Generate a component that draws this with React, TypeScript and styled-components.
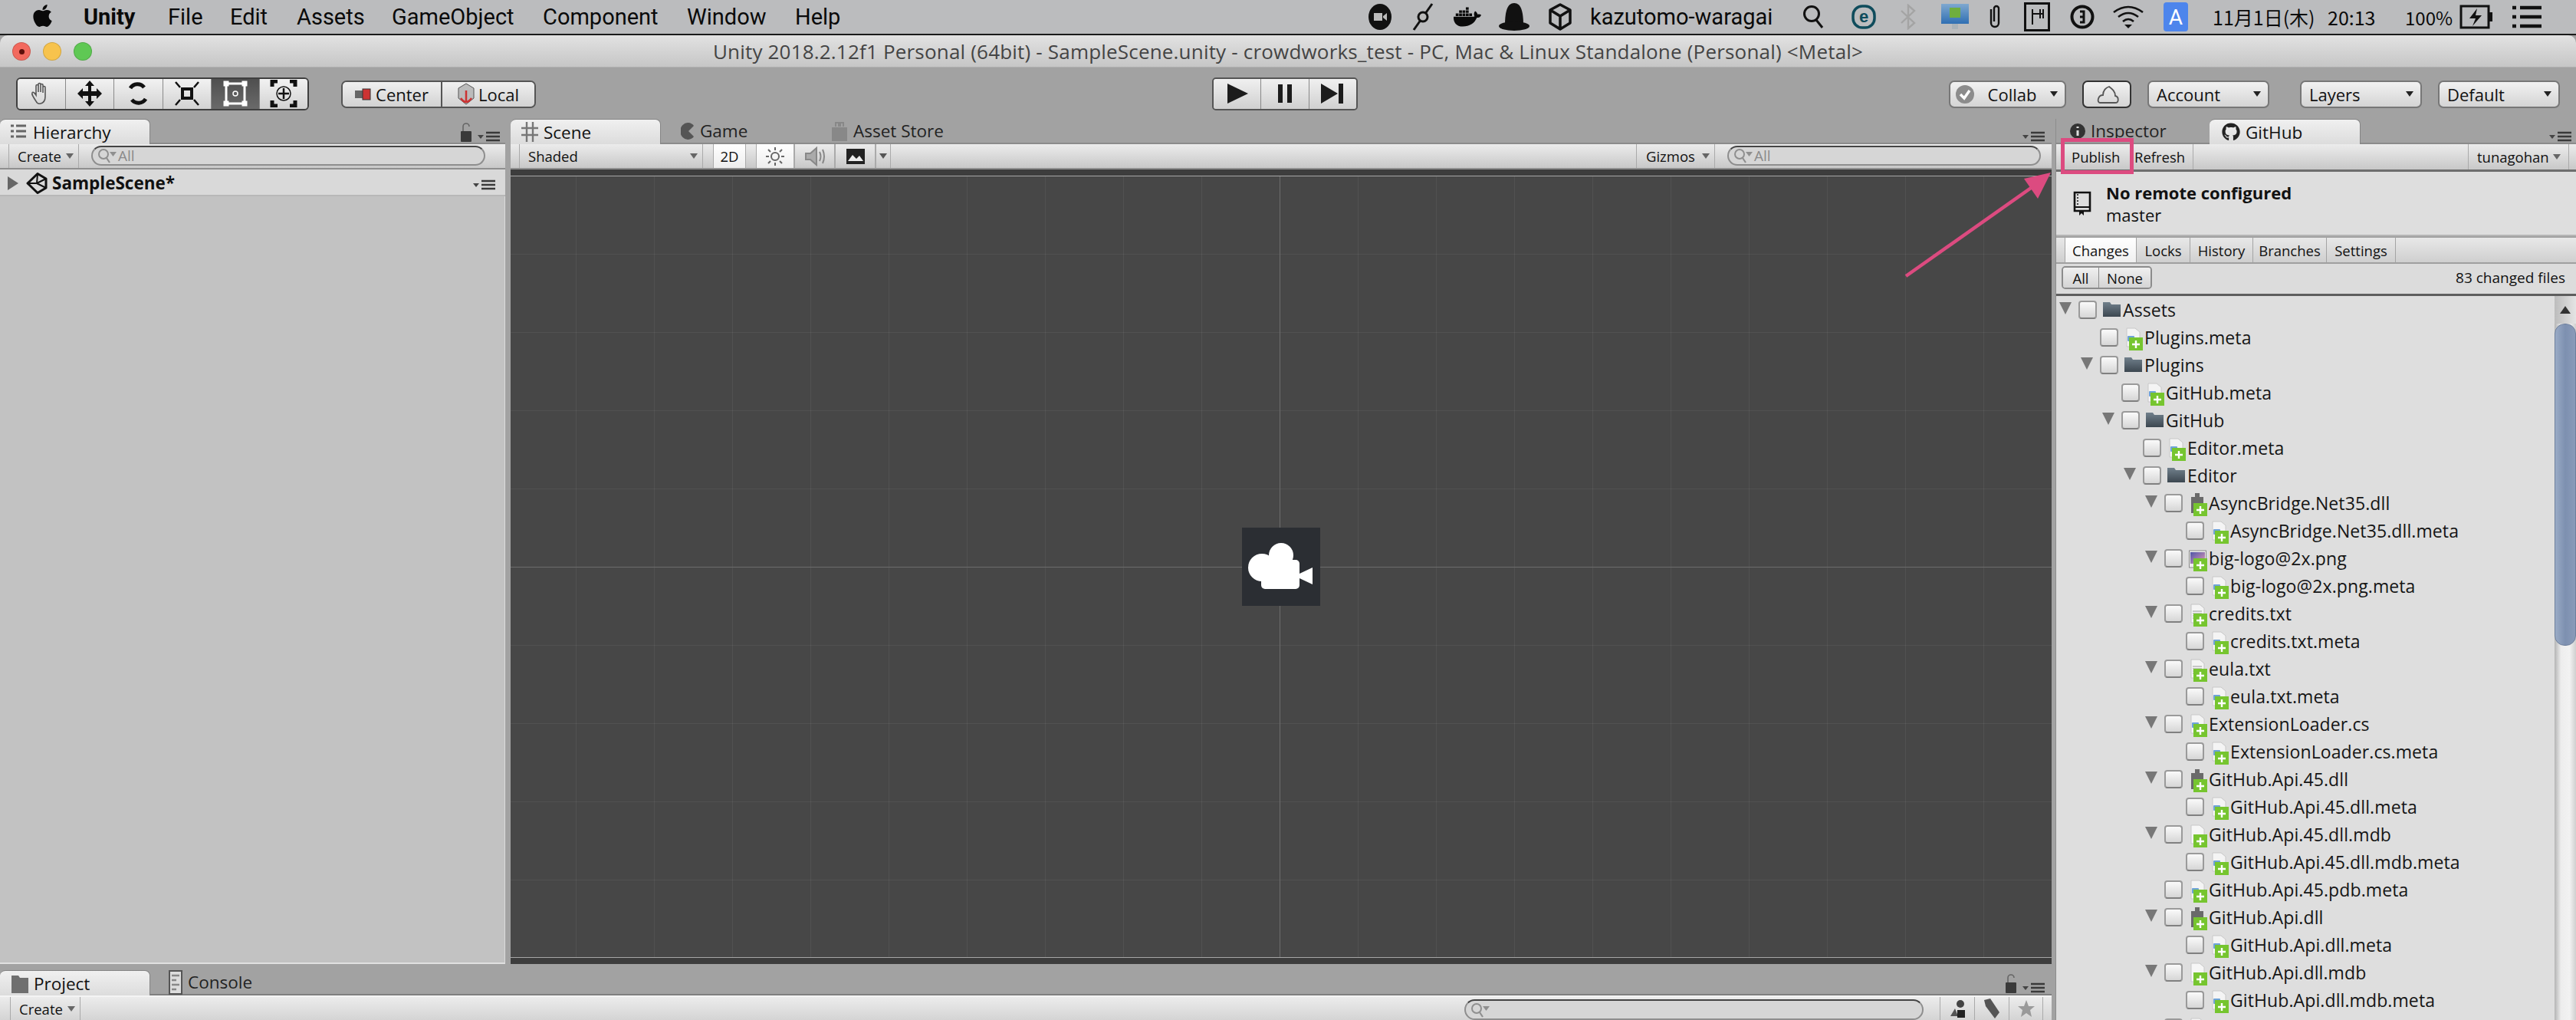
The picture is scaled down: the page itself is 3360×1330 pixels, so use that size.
import React from 'react';
import styled, { createGlobalStyle, css } from 'styled-components';
import { FaApple, FaDocker, FaGithub } from 'react-icons/fa';

const UI_FONT = '"Open Sans", "Noto Sans", "Liberation Sans", sans-serif';
const PINK = '#dc4b80';

const GlobalStyle = createGlobalStyle`
  html, body { margin: 0; padding: 0; background: #a2a2a2; }
  * { box-sizing: border-box; }
`;

// --- macOS shell ---
const Page = styled.div`
  position: relative;
  width: 3360px; height: 1330px; overflow: hidden;
  display: flex; flex-direction: column;
  background: #a2a2a2; font-family: ${UI_FONT}; color: #111;
`;
const MenuBar = styled.div`
  height: 46px; flex: none; display: flex; align-items: center;
  background: #bbbcbe; border-bottom: 2px solid #1a1a1a;
  font-family: "Roboto", "Liberation Sans", sans-serif; font-size: 29px; color: #0a0a0a;
`;
const MenuLeft = styled.div`
  display: flex; align-items: center; padding-left: 41px;
  svg { width: 29px; height: 33px; margin-right: 39px; margin-top: -4px; }
`;
const MenuItem = styled.span<{ $w: number; $bold?: boolean }>`
  width: ${p => p.$w}px; white-space: nowrap;
  font-weight: ${p => (p.$bold ? 700 : 400)};
`;
const MenuRight = styled.div`
  margin-left: auto; display: flex; align-items: center; height: 44px;
`;
const StatusSlot = styled.span<{ $w: number }>`
  width: ${p => p.$w}px; flex: none; display: flex; align-items: center; white-space: nowrap;
`;
const DateText = styled.span<{ $size?: number }>`
  font-family: "Noto Sans CJK JP", "Roboto", sans-serif; font-size: ${p => p.$size ?? 25}px; white-space: nowrap;
`;
const TitleBar = styled.div`
  height: 42px; flex: none; display: flex; align-items: center; justify-content: center; position: relative;
  background: linear-gradient(#e2e2e2, #c6c6c6); border-radius: 10px 10px 0 0;
  border-bottom: 1px solid #b0b0b0;
  font-size: 26px; color: #444; white-space: nowrap; letter-spacing: 0.19px;
`;
const TrafficLights = styled.div`
  position: absolute; left: 16px; top: 9px; display: flex; gap: 16px;
`;
const Light = styled.span<{ $c: string }>`
  width: 24px; height: 24px; border-radius: 50%; background: ${p => p.$c}; border: 1px solid rgba(0,0,0,.15);
  display: flex; align-items: center; justify-content: center;
  i { width: 7px; height: 7px; border-radius: 50%; background: #5e0f0b; }
`;

// --- Unity main toolbar ---
const MainToolbar = styled.div`
  height: 67px; flex: none; display: flex; align-items: center; padding: 0 21px;
  background: #a2a2a2;
`;
const ToolGroup = styled.div`
  width: 382px; height: 43px; display: flex; border: 2px solid #3f3f3f; border-radius: 6px; overflow: hidden;
  margin-top: 1px; flex: none;
`;
const ToolBtn = styled.div<{ $on?: boolean }>`
  flex: 1; display: flex; align-items: center; justify-content: center;
  background: ${p => (p.$on ? 'linear-gradient(#4f4f4f, #6a6a6a)' : 'linear-gradient(#f2f2f2, #d2d2d2)')};
  & + & { border-left: 1px solid #8a8a8a; }
`;
const PivotGroup = styled.div`
  margin-left: 42px; width: 254px; height: 36px; display: flex; flex: none;
  border: 2px solid #555; border-radius: 7px; overflow: hidden; margin-top: 3px;
`;
const PivotBtn = styled.div<{ $w: number }>`
  width: ${p => p.$w}px; display: flex; align-items: center; justify-content: center; gap: 5px; font-size: 22px;
  background: linear-gradient(#f0f0f0, #d2d2d2);
  & + & { border-left: 2px solid #555; }
`;
const PlayGroup = styled.div`
  margin-left: 882px; margin-top: 1px; width: 190px; height: 43px; flex: none; display: flex;
  border: 2px solid #555; border-radius: 5px; overflow: hidden;
`;
const PlayBtn = styled.div`
  flex: 1; display: flex; align-items: center; justify-content: center;
  background: linear-gradient(#f0f0f0, #d0d0d0);
  & + & { border-left: 1px solid #888; }
`;
const RightTools = styled.div`
  margin-left: auto; display: flex; align-items: center; margin-top: 2px;
`;
const DropBtn = styled.div<{ $w: number; $gap?: number; $dark?: boolean; $pl?: number }>`
  width: ${p => p.$w}px; height: 36px; margin-left: ${p => p.$gap ?? 0}px; flex: none;
  display: flex; align-items: center; justify-content: space-between; padding: 0 9px 0 ${p => p.$pl ?? 10}px;
  background: linear-gradient(#f2f2f2, #d4d4d4); font-size: 22px;
  border: 2px solid #777; border-radius: 7px;
  ${p => p.$dark && css`border-color: #333; justify-content: center;`}
`;
const Caret = styled.span<{ $c?: string }>`
  display: block; width: 0; height: 0; flex: none;
  border-left: 5px solid transparent; border-right: 5px solid transparent;
  border-top: 7px solid ${p => p.$c ?? '#222'};
`;

// --- docking layout ---
const Work = styled.div`
  flex: 1; min-height: 0; display: flex;
`;
const LeftArea = styled.div`
  width: 2681px; flex: none; display: flex; flex-direction: column;
`;
const UpperRow = styled.div`
  height: 1102px; flex: none; display: flex;
`;
const Dock = styled.div<{ $w: number }>`
  width: ${p => p.$w}px; flex: none; display: flex; flex-direction: column;
`;
const TabRow = styled.div`
  height: 33px; flex: none; display: flex; align-items: stretch;
  border-bottom: 2px solid #8b8b8b;
`;
const Tab = styled.div<{ $w: number; $active?: boolean; $pad?: number }>`
  width: ${p => p.$w}px; flex: none; display: flex; align-items: center; gap: 7px;
  padding-left: ${p => p.$pad ?? 14}px; font-size: 22.5px; color: ${p => (p.$active ? '#111' : '#222')};
  margin-bottom: ${p => (p.$active ? -2 : 0)}px;
  ${p => p.$active && css`
    background: linear-gradient(#f0f0f0, #dcdcdc);
    border-radius: 7px 7px 0 0;
    border-top: 1px solid #858585;
    border-right: 1px solid #858585;
  `}
`;
const PaneMenu = styled.div<{ $r?: number; $b?: number }>`
  margin-left: auto; margin-right: ${p => p.$r ?? 6}px; margin-bottom: ${p => p.$b ?? 1}px;
  align-self: flex-end; display: flex; align-items: flex-end; gap: 8px;
`;
const Bar = styled.div`
  height: 33px; flex: none; display: flex; align-items: stretch;
  background: linear-gradient(#ececec, #c8c8c8);
  border-bottom: 2px solid #8f8f8f;
`;
const BarBtn = styled.div<{ $w: number; $on?: boolean; $flat?: boolean; $ml?: number; $pl?: number }>`
  width: ${p => p.$w}px; flex: none; margin-left: ${p => p.$ml ?? 0}px;
  display: flex; align-items: center; justify-content: space-between; padding: 0 6px 0 ${p => p.$pl ?? 11}px; font-size: 18.5px; white-space: nowrap;
  border-left: 1px solid #aaa; border-right: 1px solid #aaa;
  ${p => (p.$on || p.$flat) && css`justify-content: center; padding: 0;`}
  ${p => p.$on && css`background: linear-gradient(#fff, #ededed);`}
`;
const GizmosBtn = styled(BarBtn)`
  margin-left: auto;
`;
const SearchBox = styled.div<{ $w: number; $ml: number; $mr?: number }>`
  width: ${p => p.$w}px; flex: none; margin: 2px ${p => p.$mr ?? 0}px 3px ${p => p.$ml}px;
  display: flex; align-items: center; padding-left: 6px; gap: 1px;
  border: 2px solid #8e8e8e; border-top-color: #444; border-radius: 14px; background: #d6d6d6;
  font-size: 19px; color: #8a8a8a;
`;
const ProjectSearch = styled(SearchBox)`
  margin-top: 3px; margin-bottom: 0;
`;
const HierarchyBody = styled.div`
  flex: 1; background: #c2c2c2; border-right: 1px solid #dcdcdc; border-bottom: 2px solid #e0e0e0;
`;
const SceneHeader = styled.div`
  height: 35px; flex: none; display: flex; align-items: center; padding-left: 10px; padding-top: 2px;
  background: #d9d9d9; border-bottom: 2px solid #b8b8b8; font-weight: 700; font-size: 22.5px;
`;
const ClosedArrow = styled.span`
  display: block; flex: none; width: 0; height: 0; margin-right: 10px;
  border-top: 9px solid transparent; border-bottom: 9px solid transparent; border-left: 14px solid #666;
`;
const LogoSlot = styled.span`
  display: flex; flex: none; margin-right: 6px;
`;
const SceneDock = styled(Dock)`
  margin-left: 7px; padding-right: 5px;
`;
const SceneView = styled.div`
  flex: 1; min-height: 0; display: flex; align-items: center; justify-content: center;
  border-top: 8px solid #3d3d3d; border-bottom: 8px solid #3d3d3d;
  background-color: #474747;
  background-image:
    linear-gradient(#a6a6a6, #a6a6a6), linear-gradient(#a6a6a6, #a6a6a6),
    linear-gradient(#6c6c6c, #6c6c6c), linear-gradient(#6c6c6c, #6c6c6c),
    linear-gradient(90deg, rgba(255,255,255,.055) 1px, transparent 1px),
    linear-gradient(rgba(255,255,255,.055) 1px, transparent 1px);
  background-size: 100% 1px, 100% 1px, 1px 100%, 100% 1px, 102px 102px, 102px 102px;
  background-position: 0 0, 0 100%, 1003px 0, 0 510px, 85px 0, 85px 0;
  background-repeat: no-repeat, no-repeat, no-repeat, no-repeat, repeat, repeat;
`;
const CameraBadge = styled.div`
  width: 102px; height: 102px; background: #2b2e33; display: flex; align-items: center; justify-content: center;
`;
const ProjectDock = styled.div`
  flex: 1; display: flex; flex-direction: column; margin-top: 8px; padding-right: 5px;
`;
const ProjectTabs = styled(TabRow)`
  border-bottom-color: #7f7f7f;
`;
const ProjectBar = styled.div`
  flex: 1; display: flex; align-items: stretch; background: linear-gradient(#ececec, #d4d4d4); border-top: 2px solid #f4f4f4;
`;
const IconCell = styled.div`
  width: 45px; flex: none; display: flex; align-items: center; justify-content: center;
  border-left: 1px solid #aaa;
  &:last-child { border-right: 1px solid #aaa; }
`;

// --- GitHub inspector panel ---
const RightDock = styled.div`
  flex: 1; min-width: 0; display: flex; flex-direction: column;
  border-left: 1px solid #8c8c8c;
`;
const GhBar = styled(Bar)`
  height: 36px; border-bottom: 3px solid #6e6e6e; padding-left: 11px;
`;
const GhBtn = styled.div<{ $w: number }>`
  width: ${p => p.$w}px; flex: none; font-size: 18.5px;
  display: flex; align-items: center; justify-content: flex-start; white-space: nowrap;
`;
const PublishBtn = styled(GhBtn)`
  padding-left: 9px;
`;
const RefreshBtn = styled(GhBtn)`
  border-right: 1px solid #aaa;
`;
const UserDrop = styled(GhBtn)`
  margin-left: auto; margin-right: 9px; justify-content: space-between; padding: 0 10px 0 11px;
  border-left: 1px solid #aaa; border-right: 1px solid #aaa;
`;
const RepoInfo = styled.div`
  height: 84px; flex: none; display: flex; align-items: center; gap: 19px; padding-left: 22px;
  background: #dedede; border-bottom: 2px solid #b4b4b4;
`;
const RepoText = styled.div`
  display: flex; flex-direction: column; gap: 3px; line-height: 26px; font-size: 22px;
  b { font-weight: 700; }
`;
const SubTabs = styled.div`
  height: 34px; flex: none; display: flex; padding-left: 11px; margin-top: 2px;
  background: linear-gradient(#e8e8e8, #cfcfcf); border-bottom: 2px solid #a0a0a0;
`;
const SubTab = styled.div<{ $w: number; $on?: boolean }>`
  width: ${p => p.$w}px; display: flex; align-items: center; justify-content: center; font-size: 18.5px; flex: none;
  border-right: 1px solid #a4a4a4;
  ${p => p.$on && css`background: linear-gradient(#fff, #f0f0f0); border-left: 1px solid #a4a4a4;`}
`;
const FilterRow = styled.div`
  height: 42px; flex: none; display: flex; align-items: center; justify-content: space-between;
  padding: 0 14px 3px 7px; background: #dcdcdc; border-bottom: 3px solid #5e5e5e; font-size: 19px;
`;
const Segmented = styled.div`
  display: flex; height: 30px; border: 2px solid #8c8c8c; border-radius: 5px; overflow: hidden; font-size: 18.5px;
`;
const Segment = styled.div<{ $w: number }>`
  width: ${p => p.$w}px; display: flex; align-items: center; justify-content: center;
  background: linear-gradient(#f0f0f0, #d4d4d4);
  & + & { border-left: 1px solid #8c8c8c; }
`;
const TreeArea = styled.div`
  flex: 1; min-height: 0; display: flex; background: #dedede; overflow: hidden;
`;
const Tree = styled.div`
  flex: 1; overflow: hidden;
`;
const Row = styled.div<{ $level: number }>`
  height: 36px; display: flex; align-items: center; white-space: nowrap;
  padding-left: ${p => 4 + p.$level * 28}px; font-size: 23px; letter-spacing: 0.1px; color: #151515;
`;
const ArrowSlot = styled.span`
  width: 25px; flex: none; display: block;
`;
const OpenArrow = styled.span`
  display: block; width: 0; height: 0; margin-top: -5px;
  border-left: 8.5px solid transparent; border-right: 8.5px solid transparent; border-top: 16px solid #777;
`;
const Check = styled.span`
  width: 24px; height: 24px; flex: none; border-radius: 4px; margin-right: 8px;
  border: 2px solid #9a9a9a; border-bottom-color: #808080;
  background: linear-gradient(#fafafa, #d6d6d6);
`;
const IconBox = styled.span`
  width: 24px; height: 32px; flex: none; position: relative; display: block; margin-right: 2px;
  & > svg { display: block; }
`;
const PlusBadge = styled.span`
  position: absolute; left: 6px; top: 16px; width: 18px; height: 17px; background: #76c52f;
  display: flex; align-items: center; justify-content: center;
`;
const Scrollbar = styled.div`
  width: 28px; flex: none; display: flex; flex-direction: column; align-items: stretch;
  background: linear-gradient(90deg, #b4b4b4, #ededed 30%, #f2f2f2 70%, #cfcfcf);
`;
const ScrollUp = styled.div`
  height: 36px; flex: none; display: flex; align-items: center; justify-content: center;
  background: linear-gradient(90deg, #bcbcbc, #e4e4e4);
  i { width: 0; height: 0; border-left: 7px solid transparent; border-right: 7px solid transparent; border-bottom: 10px solid #333; }
`;
const ScrollThumb = styled.div`
  height: 420px; flex: none; border-radius: 13px; border: 1px solid #6d7f9c;
  background: linear-gradient(90deg, #9aabc6, #7d90b0 50%, #8a9bb9);
`;

// --- annotation over the screenshot ---
const Highlight = styled.div`
  position: absolute; left: 2688px; top: 180px; width: 95px; height: 47px;
  border: 5px solid ${PINK}; pointer-events: none;
`;
const Annotation = styled.svg`
  position: absolute; left: 2480px; top: 215px; width: 200px; height: 150px; pointer-events: none;
`;

// --- icons ---
const UnityMark = () => (
  <svg width="28" height="28" viewBox="0 0 28 28" fill="none" stroke="#111" strokeWidth="3" strokeLinejoin="round">
    <path d="M15 1.5 L26 8 V20 L15 26.5 L2 14 Z" />
    <path d="M2 14 H14 L26 8 M14 14 L26 20 M14 14 L15 2" strokeWidth="2" />
  </svg>
);
const FileIcon = () => (
  <svg width="24" height="32" viewBox="0 0 24 32">
    <path d="M3 4 H14 L20 9 V28 H3 Z" fill="#f4f4f4" stroke="#c8c8c8" />
    <rect x="4" y="14" width="9" height="7" rx="1" fill="#6ea3d8" />
  </svg>
);
const PlainFileIcon = () => (
  <svg width="24" height="32" viewBox="0 0 24 32">
    <path d="M3 4 H14 L20 9 V28 H3 Z" fill="#f6f6f6" stroke="#c8c8c8" />
  </svg>
);
const TxtIcon = () => (
  <svg width="24" height="32" viewBox="0 0 24 32">
    <path d="M3 4 H14 L20 9 V28 H3 Z" fill="#f4f4f4" stroke="#c4c4c4" />
    <path d="M5 13 H17 M5 16 H17 M5 19 H17 M5 22 H17" stroke="#999" strokeWidth="1.2" />
  </svg>
);
const DllIcon = () => (
  <svg width="24" height="32" viewBox="0 0 24 32">
    <path d="M8 3 h6 v5 h5 v8 h-5 v3 h5 v10 H3 V8 h5 Z" fill="#6a6a6a" />
  </svg>
);
const PngIcon = () => (
  <svg width="24" height="32" viewBox="0 0 24 32">
    <defs>
      <linearGradient id="pngFill" x1="0" y1="0" x2="1" y2="1">
        <stop offset="0" stopColor="#4f56a8" />
        <stop offset="1" stopColor="#e59bb6" />
      </linearGradient>
    </defs>
    <rect x="0.5" y="6" width="22" height="22" fill="#eee" stroke="#888" />
    <rect x="2" y="8" width="19" height="15" fill="url(#pngFill)" />
  </svg>
);
const FolderIcon = () => (
  <svg width="24" height="32" viewBox="0 0 24 32">
    <defs>
      <linearGradient id="folderFill" x1="0" y1="0" x2="0" y2="1">
        <stop offset="0" stopColor="#71808c" />
        <stop offset="1" stopColor="#3c4750" />
      </linearGradient>
    </defs>
    <path d="M0 6 H9 L11 9 H23 V25 H0 Z" fill="url(#folderFill)" />
  </svg>
);
const Plus = () => (
  <svg width="12" height="12" viewBox="0 0 12 12">
    <path d="M6 1 V11 M1 6 H11" stroke="#fff" strokeWidth="2.4" />
  </svg>
);
const PaneLines = () => (
  <svg width="30" height="14" viewBox="0 0 30 14">
    <path d="M0 5 H8 L4 10 Z" fill="#444" />
    <path d="M11 2 H29 M11 7 H29 M11 12 H29" stroke="#3a3a3a" strokeWidth="2.4" />
  </svg>
);
const Padlock = () => (
  <svg width="14" height="26" viewBox="0 0 14 26">
    <path d="M3 13 V6 a4 4 0 0 1 8 0" fill="none" stroke="#666" strokeWidth="1.6" />
    <rect x="0" y="12" width="14" height="14" rx="1" fill="#3a3a3a" />
  </svg>
);
const SearchGlass = () => (
  <svg width="26" height="22" viewBox="0 0 26 22" fill="none">
    <circle cx="8" cy="9" r="6" stroke="#8f8f8f" strokeWidth="2" />
    <path d="M12 14 L16 20" stroke="#8f8f8f" strokeWidth="2.2" />
    <path d="M16 6 H25 L20.5 12 Z" fill="#8f8f8f" />
  </svg>
);
const ToolIcon = ({ d, on }: { d: React.ReactNode; on?: boolean }) => (
  <svg width="42" height="36" viewBox="0 0 42 36" fill="none" stroke={on ? '#fff' : '#111'}>{d}</svg>
);
const PlayIcon = ({ kind }: { kind: 'play' | 'pause' | 'step' }) => (
  <svg width="30" height="26" viewBox="0 0 30 26" fill="#1c1c1c">
    {kind === 'play' && <path d="M2 0 L29 13 L2 26 Z" />}
    {kind === 'pause' && <path d="M6 1 H12 V25 H6 Z M18 1 H24 V25 H18 Z" />}
    {kind === 'step' && <path d="M0 0 L22 13 L0 26 Z M23 0 H29 V26 H23 Z" />}
  </svg>
);

type Kind = 'folder' | 'meta' | 'txt' | 'dll' | 'png' | 'cs' | 'mdb';
interface TreeItem { level: number; name: string; kind: Kind; open?: boolean; }

const TREE: TreeItem[] = [
  { level: 0, name: 'Assets', kind: 'folder', open: true },
  { level: 1, name: 'Plugins.meta', kind: 'meta' },
  { level: 1, name: 'Plugins', kind: 'folder', open: true },
  { level: 2, name: 'GitHub.meta', kind: 'meta' },
  { level: 2, name: 'GitHub', kind: 'folder', open: true },
  { level: 3, name: 'Editor.meta', kind: 'meta' },
  { level: 3, name: 'Editor', kind: 'folder', open: true },
  { level: 4, name: 'AsyncBridge.Net35.dll', kind: 'dll', open: true },
  { level: 5, name: 'AsyncBridge.Net35.dll.meta', kind: 'meta' },
  { level: 4, name: 'big-logo@2x.png', kind: 'png', open: true },
  { level: 5, name: 'big-logo@2x.png.meta', kind: 'meta' },
  { level: 4, name: 'credits.txt', kind: 'txt', open: true },
  { level: 5, name: 'credits.txt.meta', kind: 'meta' },
  { level: 4, name: 'eula.txt', kind: 'txt', open: true },
  { level: 5, name: 'eula.txt.meta', kind: 'meta' },
  { level: 4, name: 'ExtensionLoader.cs', kind: 'cs', open: true },
  { level: 5, name: 'ExtensionLoader.cs.meta', kind: 'meta' },
  { level: 4, name: 'GitHub.Api.45.dll', kind: 'dll', open: true },
  { level: 5, name: 'GitHub.Api.45.dll.meta', kind: 'meta' },
  { level: 4, name: 'GitHub.Api.45.dll.mdb', kind: 'mdb', open: true },
  { level: 5, name: 'GitHub.Api.45.dll.mdb.meta', kind: 'meta' },
  { level: 4, name: 'GitHub.Api.45.pdb.meta', kind: 'meta' },
  { level: 4, name: 'GitHub.Api.dll', kind: 'dll', open: true },
  { level: 5, name: 'GitHub.Api.dll.meta', kind: 'meta' },
  { level: 4, name: 'GitHub.Api.dll.mdb', kind: 'mdb', open: true },
  { level: 5, name: 'GitHub.Api.dll.mdb.meta', kind: 'meta' },
  // only the top of this row's checkbox and icon fits in the window
  { level: 4, name: '', kind: 'meta' },
];

const TreeRow = ({ item }: { item: TreeItem }) => (
  <Row $level={item.level}>
    <ArrowSlot>{item.open && <OpenArrow />}</ArrowSlot>
    <Check />
    <IconBox>
      {item.kind === 'folder' && <FolderIcon />}
      {(item.kind === 'meta' || item.kind === 'cs') && <FileIcon />}
      {item.kind === 'mdb' && <PlainFileIcon />}
      {item.kind === 'txt' && <TxtIcon />}
      {item.kind === 'dll' && <DllIcon />}
      {item.kind === 'png' && <PngIcon />}
      {item.kind !== 'folder' && <PlusBadge><Plus /></PlusBadge>}
    </IconBox>
    {item.name}
  </Row>
);

export default function App() {
  return (
    <Page>
      <GlobalStyle />
      <MenuBar>
        <MenuLeft>
          <FaApple />
          <MenuItem $w={110} $bold>Unity</MenuItem>
          <MenuItem $w={81}>File</MenuItem>
          <MenuItem $w={87}>Edit</MenuItem>
          <MenuItem $w={124}>Assets</MenuItem>
          <MenuItem $w={197}>GameObject</MenuItem>
          <MenuItem $w={188}>Component</MenuItem>
          <MenuItem $w={141}>Window</MenuItem>
          <MenuItem $w={60}>Help</MenuItem>
        </MenuLeft>
        <MenuRight>
          <StatusSlot $w={53}>
            <svg width="30" height="34" viewBox="0 0 30 34"><ellipse cx="15" cy="17" rx="15" ry="17" fill="#111" /><path d="M7 12 H18 V22 H7 Z M19 16 L24 12 V22 L19 18 Z" fill="#bbb" /></svg>
          </StatusSlot>
          <StatusSlot $w={58}>
            <svg width="36" height="38" viewBox="0 0 36 38" fill="none" stroke="#111" strokeWidth="3"><path d="M30 2 L6 36" /><circle cx="18" cy="19" r="6" fill="#bbb" /></svg>
          </StatusSlot>
          <StatusSlot $w={58}><FaDocker size={36} /></StatusSlot>
          <StatusSlot $w={66}>
            <svg width="42" height="38" viewBox="0 0 42 38" fill="#111"><path d="M9 30 C9 12 12 1 21 1 C30 1 33 12 33 30 Z" /><ellipse cx="21" cy="31" rx="20" ry="6" /></svg>
          </StatusSlot>
          <StatusSlot $w={54}>
            <svg width="30" height="36" viewBox="0 0 30 36" fill="none" stroke="#111" strokeWidth="3.5" strokeLinejoin="round"><path d="M15 2 L28 9 V26 L15 34 L2 26 V9 Z M2 9 L15 17 L28 9 M15 17 V34" /></svg>
          </StatusSlot>
          <StatusSlot $w={277}>kazutomo-waragai</StatusSlot>
          <StatusSlot $w={64}>
            <svg width="28" height="32" viewBox="0 0 28 32" fill="none" stroke="#111" strokeWidth="3"><circle cx="12" cy="12" r="9.5" /><path d="M18 20 L26 30" /></svg>
          </StatusSlot>
          <StatusSlot $w={63}>
            <svg width="32" height="32" viewBox="0 0 32 32"><rect x="2" y="2" width="28" height="28" rx="12" fill="none" stroke="#0f4c5c" strokeWidth="3.5" /><text x="16" y="23" textAnchor="middle" fontSize="22" fontWeight="700" fontFamily="Liberation Sans" fill="#0f4c5c">e</text></svg>
          </StatusSlot>
          <StatusSlot $w={53}>
            <svg width="22" height="34" viewBox="0 0 22 34" fill="none" stroke="#a4a4a4" strokeWidth="2.4"><path d="M2 9 L19 25 L11 32 V2 L19 9 L2 25" /></svg>
          </StatusSlot>
          <StatusSlot $w={61}>
            <svg width="38" height="38" viewBox="0 0 38 38">
              <defs>
                <linearGradient id="screenFill" x1="0" y1="0" x2="0" y2="1">
                  <stop offset="0" stopColor="#7fa8cf" />
                  <stop offset="1" stopColor="#2f6fb3" />
                </linearGradient>
              </defs>
              <rect x="1" y="2" width="36" height="26" fill="url(#screenFill)" />
              <rect x="12" y="7" width="14" height="13" fill="#6fae3e" />
              <rect x="15" y="28" width="8" height="7" fill="#a9b2b8" />
            </svg>
          </StatusSlot>
          <StatusSlot $w={48}>
            <svg width="20" height="36" viewBox="0 0 20 36" fill="none" stroke="#111" strokeWidth="2.4"><path d="M5 8 V26 a5 5 0 0 0 10 0 V7 a3 3 0 0 0 -6 0 V24" /></svg>
          </StatusSlot>
          <StatusSlot $w={60}>
            <svg width="34" height="38" viewBox="0 0 34 38"><rect x="1.5" y="1.5" width="31" height="35" fill="none" stroke="#111" strokeWidth="3" /><path d="M11 9 V29 M21 9 V21 M25 9 V21 M11 15 H25" stroke="#111" strokeWidth="2" fill="none" /></svg>
          </StatusSlot>
          <StatusSlot $w={55}>
            <svg width="32" height="32" viewBox="0 0 32 32" fill="none"><circle cx="16" cy="16" r="13.5" stroke="#111" strokeWidth="4" /><path d="M13 9 H18 V23 H13 M13 16 H18" stroke="#111" strokeWidth="3" /></svg>
          </StatusSlot>
          <StatusSlot $w={67}>
            <svg width="42" height="30" viewBox="0 0 42 30" fill="none" stroke="#111" strokeWidth="2.6"><path d="M2 9 Q21 -5 40 9 M8 15 Q21 5 34 15 M14 21 Q21 15 28 21" /><path d="M16 25 H26 L21 30 Z" fill="#111" stroke="none" /></svg>
          </StatusSlot>
          <StatusSlot $w={64}>
            <svg width="32" height="38" viewBox="0 0 32 38"><rect width="32" height="38" rx="4" fill="#4d85ec" /><text x="16" y="29" textAnchor="middle" fontSize="28" fontFamily="Roboto" fill="#fff">A</text></svg>
          </StatusSlot>
          <StatusSlot $w={150}><DateText>11月1日(木)</DateText></StatusSlot>
          <StatusSlot $w={101}><DateText>20:13</DateText></StatusSlot>
          <StatusSlot $w={71}><DateText $size={24}>100%</DateText></StatusSlot>
          <StatusSlot $w={69}>
            <svg width="44" height="32" viewBox="0 0 44 32" fill="none"><rect x="2" y="2" width="36" height="28" stroke="#111" strokeWidth="3" /><rect x="39" y="10" width="4" height="12" fill="#111" /><path d="M23 5 L13 18 H21 L17 28 L29 14 H21 Z" fill="#111" /></svg>
          </StatusSlot>
          <StatusSlot $w={83}>
            <svg width="38" height="30" viewBox="0 0 38 30"><path d="M0 3 H5 M0 15 H5 M0 27 H5 M10 3 H38 M10 15 H38 M10 27 H38" stroke="#111" strokeWidth="4.5" /></svg>
          </StatusSlot>
        </MenuRight>
      </MenuBar>

      <TitleBar>
        <TrafficLights>
          <Light $c="#f2695e"><i /></Light>
          <Light $c="#f7c34d" />
          <Light $c="#5fc854" />
        </TrafficLights>
        Unity 2018.2.12f1 Personal (64bit) - SampleScene.unity - crowdworks_test - PC, Mac &amp; Linux Standalone (Personal) &lt;Metal&gt;
      </TitleBar>

      <MainToolbar>
        <ToolGroup>
          <ToolBtn><ToolIcon d={<path d="M14 28 C10 22 8 19 9 17 C10 15 12 17 14 20 V8 C14 6 17 6 17 8 V16 V6 C17 4 20 4 20 6 V16 V7 C20 5 23 5 23 7 V17 V10 C23 8 26 8 26 10 V22 C26 26 24 30 20 31 C17 32 15 30 14 28 Z" stroke="#555" strokeWidth="1.6" />} /></ToolBtn>
          <ToolBtn><ToolIcon d={<path d="M21 1 L27 8 H23 V15 H30 V11 L37 18 L30 25 V21 H23 V28 H27 L21 35 L15 28 H19 V21 H12 V25 L5 18 L12 11 V15 H19 V8 H15 Z" fill="#111" stroke="none" />} /></ToolBtn>
          <ToolBtn><ToolIcon d={<path d="M29 10 A11 11 0 0 0 11 11 M13 26 A11 11 0 0 0 31 25" strokeWidth="5" />} /></ToolBtn>
          <ToolBtn><ToolIcon d={<g strokeWidth="2.5"><rect x="15" y="12" width="12" height="12" strokeWidth="4" /><path d="M6 3 L12 10 M36 3 L30 10 M6 33 L12 26 M36 33 L30 26" /></g>} /></ToolBtn>
          <ToolBtn $on><ToolIcon on d={<g><rect x="9" y="5" width="24" height="26" strokeWidth="3" /><rect x="6" y="2" width="6" height="6" fill="#fff" /><rect x="30" y="2" width="6" height="6" fill="#fff" /><rect x="6" y="28" width="6" height="6" fill="#fff" /><rect x="30" y="28" width="6" height="6" fill="#fff" /><circle cx="21" cy="18" r="3" strokeWidth="1.5" /></g>} /></ToolBtn>
          <ToolBtn><ToolIcon d={<g><path d="M6 9 V2 H13 M29 2 H36 V9 M36 27 V34 H29 M13 34 H6 V27" strokeWidth="5" /><circle cx="21" cy="18" r="9" strokeWidth="1.5" /><path d="M21 11 V25 M14 18 H28" strokeWidth="2.5" /></g>} /></ToolBtn>
        </ToolGroup>
        <PivotGroup>
          <PivotBtn $w={128}>
            <svg width="22" height="20" viewBox="0 0 22 20"><rect x="0" y="5" width="10" height="10" fill="#666" /><rect x="10" y="3" width="10" height="14" fill="#c33" stroke="#333" /></svg>
            Center
          </PivotBtn>
          <PivotBtn $w={122}>
            <svg width="22" height="30" viewBox="0 0 22 30"><path d="M11 1 L21 7 V20 L11 28 L1 20 V7 Z" fill="#bbb" stroke="#555" /><path d="M11 10 V26 M4 20 Q11 30 18 20" stroke="#c33" strokeWidth="2.5" fill="none" /></svg>
            Local
          </PivotBtn>
        </PivotGroup>
        <PlayGroup>
          <PlayBtn><PlayIcon kind="play" /></PlayBtn>
          <PlayBtn><PlayIcon kind="pause" /></PlayBtn>
          <PlayBtn><PlayIcon kind="step" /></PlayBtn>
        </PlayGroup>
        <RightTools>
          <DropBtn $w={153} $pl={7}>
            <svg width="24" height="24" viewBox="0 0 24 24"><circle cx="12" cy="12" r="12" fill="#8c8c8c" /><path d="M6 12 L11 17 L18 7" stroke="#fff" strokeWidth="3.5" fill="none" /></svg>
            Collab <Caret />
          </DropBtn>
          <DropBtn $w={64} $gap={21} $dark>
            <svg width="32" height="26" viewBox="0 0 32 26" fill="none" stroke="#555" strokeWidth="1.8"><path d="M6 24 H26 C31 24 31 16 26 15 C26 9 22 6 18 3 C14 4 10 8 10 14 C3 14 2 24 6 24 Z" /></svg>
          </DropBtn>
          <DropBtn $w={159} $gap={21}>Account <Caret /></DropBtn>
          <DropBtn $w={159} $gap={40}>Layers <Caret /></DropBtn>
          <DropBtn $w={159} $gap={21}>Default <Caret /></DropBtn>
        </RightTools>
      </MainToolbar>

      <Work>
        <LeftArea>
          <UpperRow>
            <Dock $w={659}>
              <TabRow>
                <Tab $w={196} $active>
                  <svg width="22" height="20" viewBox="0 0 22 20"><path d="M0 2 H4 M7 2 H20 M0 9 H4 M7 9 H20 M0 16 H4 M7 16 H20" stroke="#666" strokeWidth="3" /></svg>
                  Hierarchy
                </Tab>
                <PaneMenu><Padlock /><PaneLines /></PaneMenu>
              </TabRow>
              <Bar>
                <BarBtn $w={92} $ml={11}>Create <Caret $c="#666" /></BarBtn>
                <SearchBox $w={514} $ml={16}><SearchGlass />All</SearchBox>
              </Bar>
              <SceneHeader>
                <ClosedArrow />
                <LogoSlot><UnityMark /></LogoSlot>
                SampleScene*
                <PaneMenu $r={12} $b={6}><PaneLines /></PaneMenu>
              </SceneHeader>
              <HierarchyBody />
            </Dock>
            <SceneDock $w={2015}>
              <TabRow>
                <Tab $w={196} $active>
                  <svg width="22" height="26" viewBox="0 0 22 26"><path d="M7 0 V26 M15 0 V26 M0 8 H22 M0 17 H22" stroke="#777" strokeWidth="2.4" /></svg>
                  Scene
                </Tab>
                <Tab $w={205} $pad={26}>
                  <svg width="18" height="22" viewBox="0 0 18 22"><path d="M17 4 A10 11 0 1 0 17 18 L10 11 Z" fill="#555" /></svg>
                  Game
                </Tab>
                <Tab $w={300} $pad={17}>
                  <svg width="22" height="26" viewBox="0 0 22 26"><rect x="1" y="8" width="20" height="18" fill="#888" /><path d="M6 7 V2 H10 V7 M12 7 V2 H16 V7" stroke="#888" strokeWidth="2" fill="none" /></svg>
                  Asset Store
                </Tab>
                <PaneMenu $r={8}><PaneLines /></PaneMenu>
              </TabRow>
              <Bar>
                <BarBtn $w={240} $ml={11}>Shaded <Caret $c="#666" /></BarBtn>
                <BarBtn $w={43} $ml={13} $on>2D</BarBtn>
                <BarBtn $w={50} $ml={13} $on>
                  <svg width="26" height="26" viewBox="0 0 26 26" fill="none" stroke="#666" strokeWidth="2"><circle cx="13" cy="13" r="5" /><path d="M13 1 V5 M13 21 V25 M1 13 H5 M21 13 H25 M4 4 L7 7 M19 19 L22 22 M4 22 L7 19 M19 7 L22 4" /></svg>
                </BarBtn>
                <BarBtn $w={53} $flat>
                  <svg width="28" height="28" viewBox="0 0 28 28" fill="none" stroke="#888" strokeWidth="2"><path d="M2 10 H8 L16 3 V25 L8 18 H2 Z" fill="#aaa" /><path d="M20 8 Q23 14 20 20 M24 5 Q28 14 24 23" /></svg>
                </BarBtn>
                <BarBtn $w={53} $flat>
                  <svg width="24" height="20" viewBox="0 0 24 20"><rect x="0" y="0" width="24" height="20" fill="#222" /><path d="M2 16 L8 8 L13 13 L17 9 L22 16 Z" fill="#eee" /></svg>
                </BarBtn>
                <BarBtn $w={20} $flat><Caret $c="#555" /></BarBtn>
                <GizmosBtn $w={103} $pl={12}>Gizmos <Caret $c="#666" /></GizmosBtn>
                <SearchBox $w={409} $ml={16} $mr={14}><SearchGlass />All</SearchBox>
              </Bar>
              <SceneView>
                <CameraBadge>
                  <svg width="86" height="62" viewBox="0 0 86 62" fill="#fff">
                    <circle cx="43" cy="16" r="16" />
                    <circle cx="18" cy="32" r="18" />
                    <rect x="17" y="22" width="50" height="38" rx="5" />
                    <path d="M67 40 L84 32 V54 L67 46 Z" />
                  </svg>
                </CameraBadge>
              </SceneView>
            </SceneDock>
          </UpperRow>
          <ProjectDock>
            <ProjectTabs>
              <Tab $w={196} $active $pad={15}>
                <svg width="22" height="26" viewBox="0 0 22 26"><path d="M0 3 H9 L11 6 H22 V26 H0 Z" fill="#6f6f6f" /></svg>
                Project
              </Tab>
              <Tab $w={200} $pad={24}>
                <svg width="18" height="32" viewBox="0 0 18 32"><rect x="1" y="1" width="16" height="30" fill="#ddd" stroke="#555" strokeWidth="2" /><path d="M4 7 H14 M4 13 H10 M4 19 H14 M4 25 H10" stroke="#888" strokeWidth="2.5" /></svg>
                Console
              </Tab>
              <PaneMenu $r={8}><Padlock /><PaneLines /></PaneMenu>
            </ProjectTabs>
            <ProjectBar>
              <BarBtn $w={92} $ml={13}>Create <Caret $c="#666" /></BarBtn>
              <ProjectSearch $w={599} $ml={1805} $mr={21}>
                <SearchGlass />
              </ProjectSearch>
              <IconCell><svg width="24" height="28" viewBox="0 0 24 28"><path d="M3 24 L9 14 L13 24 Z" fill="#555" /><circle cx="16" cy="8" r="5" fill="#444" /><rect x="12" y="16" width="10" height="10" fill="#222" /></svg></IconCell>
              <IconCell><svg width="24" height="30" viewBox="0 0 24 30"><path d="M2 4 L10 2 L22 20 L16 28 L4 12 Z" fill="#555" /></svg></IconCell>
              <IconCell><svg width="24" height="24" viewBox="0 0 24 24"><path d="M12 1 L15 9 H23 L17 14 L19 23 L12 18 L5 23 L7 14 L1 9 H9 Z" fill="#9a9a9a" /></svg></IconCell>
            </ProjectBar>
          </ProjectDock>
        </LeftArea>

        <RightDock>
          <TabRow>
            <Tab $w={200} $pad={18}>
              <svg width="20" height="20" viewBox="0 0 20 20"><circle cx="10" cy="10" r="10" fill="#333" /><path d="M10 4 V6 M10 9 V16" stroke="#ddd" strokeWidth="3" /></svg>
              Inspector
            </Tab>
            <Tab $w={197} $active $pad={16}>
              <FaGithub size={24} color="#222" />
              GitHub
            </Tab>
            <PaneMenu $r={5}><PaneLines /></PaneMenu>
          </TabRow>
          <GhBar>
            <PublishBtn $w={91}>Publish</PublishBtn>
            <RefreshBtn $w={77}>Refresh</RefreshBtn>
            <UserDrop $w={132}>tunagohan <Caret $c="#666" /></UserDrop>
          </GhBar>
          <RepoInfo>
            <svg width="24" height="32" viewBox="0 0 24 32" fill="none" stroke="#111">
              <path d="M2 2 H22 V26 H2 Z" strokeWidth="2.6" />
              <path d="M2 21 H22" strokeWidth="2" />
              <path d="M6 4 V19" strokeWidth="1.5" strokeDasharray="2 2" />
              <path d="M8 26 V32 L11 29 L14 32 V26 Z" fill="#111" strokeWidth="0" />
            </svg>
            <RepoText>
              <b>No remote configured</b>
              <span>master</span>
            </RepoText>
          </RepoInfo>
          <SubTabs>
            <SubTab $w={94} $on>Changes</SubTab>
            <SubTab $w={70}>Locks</SubTab>
            <SubTab $w={82}>History</SubTab>
            <SubTab $w={96}>Branches</SubTab>
            <SubTab $w={90}>Settings</SubTab>
          </SubTabs>
          <FilterRow>
            <Segmented>
              <Segment $w={46}>All</Segment>
              <Segment $w={68}>None</Segment>
            </Segmented>
            <span>83 changed files</span>
          </FilterRow>
          <TreeArea>
            <Tree>
              {TREE.map((item, i) => <TreeRow key={i} item={item} />)}
            </Tree>
            <Scrollbar>
              <ScrollUp><i /></ScrollUp>
              <ScrollThumb />
            </Scrollbar>
          </TreeArea>
        </RightDock>
      </Work>

      <Highlight />
      <Annotation viewBox="0 0 200 150">
        <path d="M6 145 L172 28" stroke={PINK} strokeWidth="4.5" fill="none" />
        <path d="M195 10 L160 18 L178 44 Z" fill={PINK} />
      </Annotation>
    </Page>
  );
}
